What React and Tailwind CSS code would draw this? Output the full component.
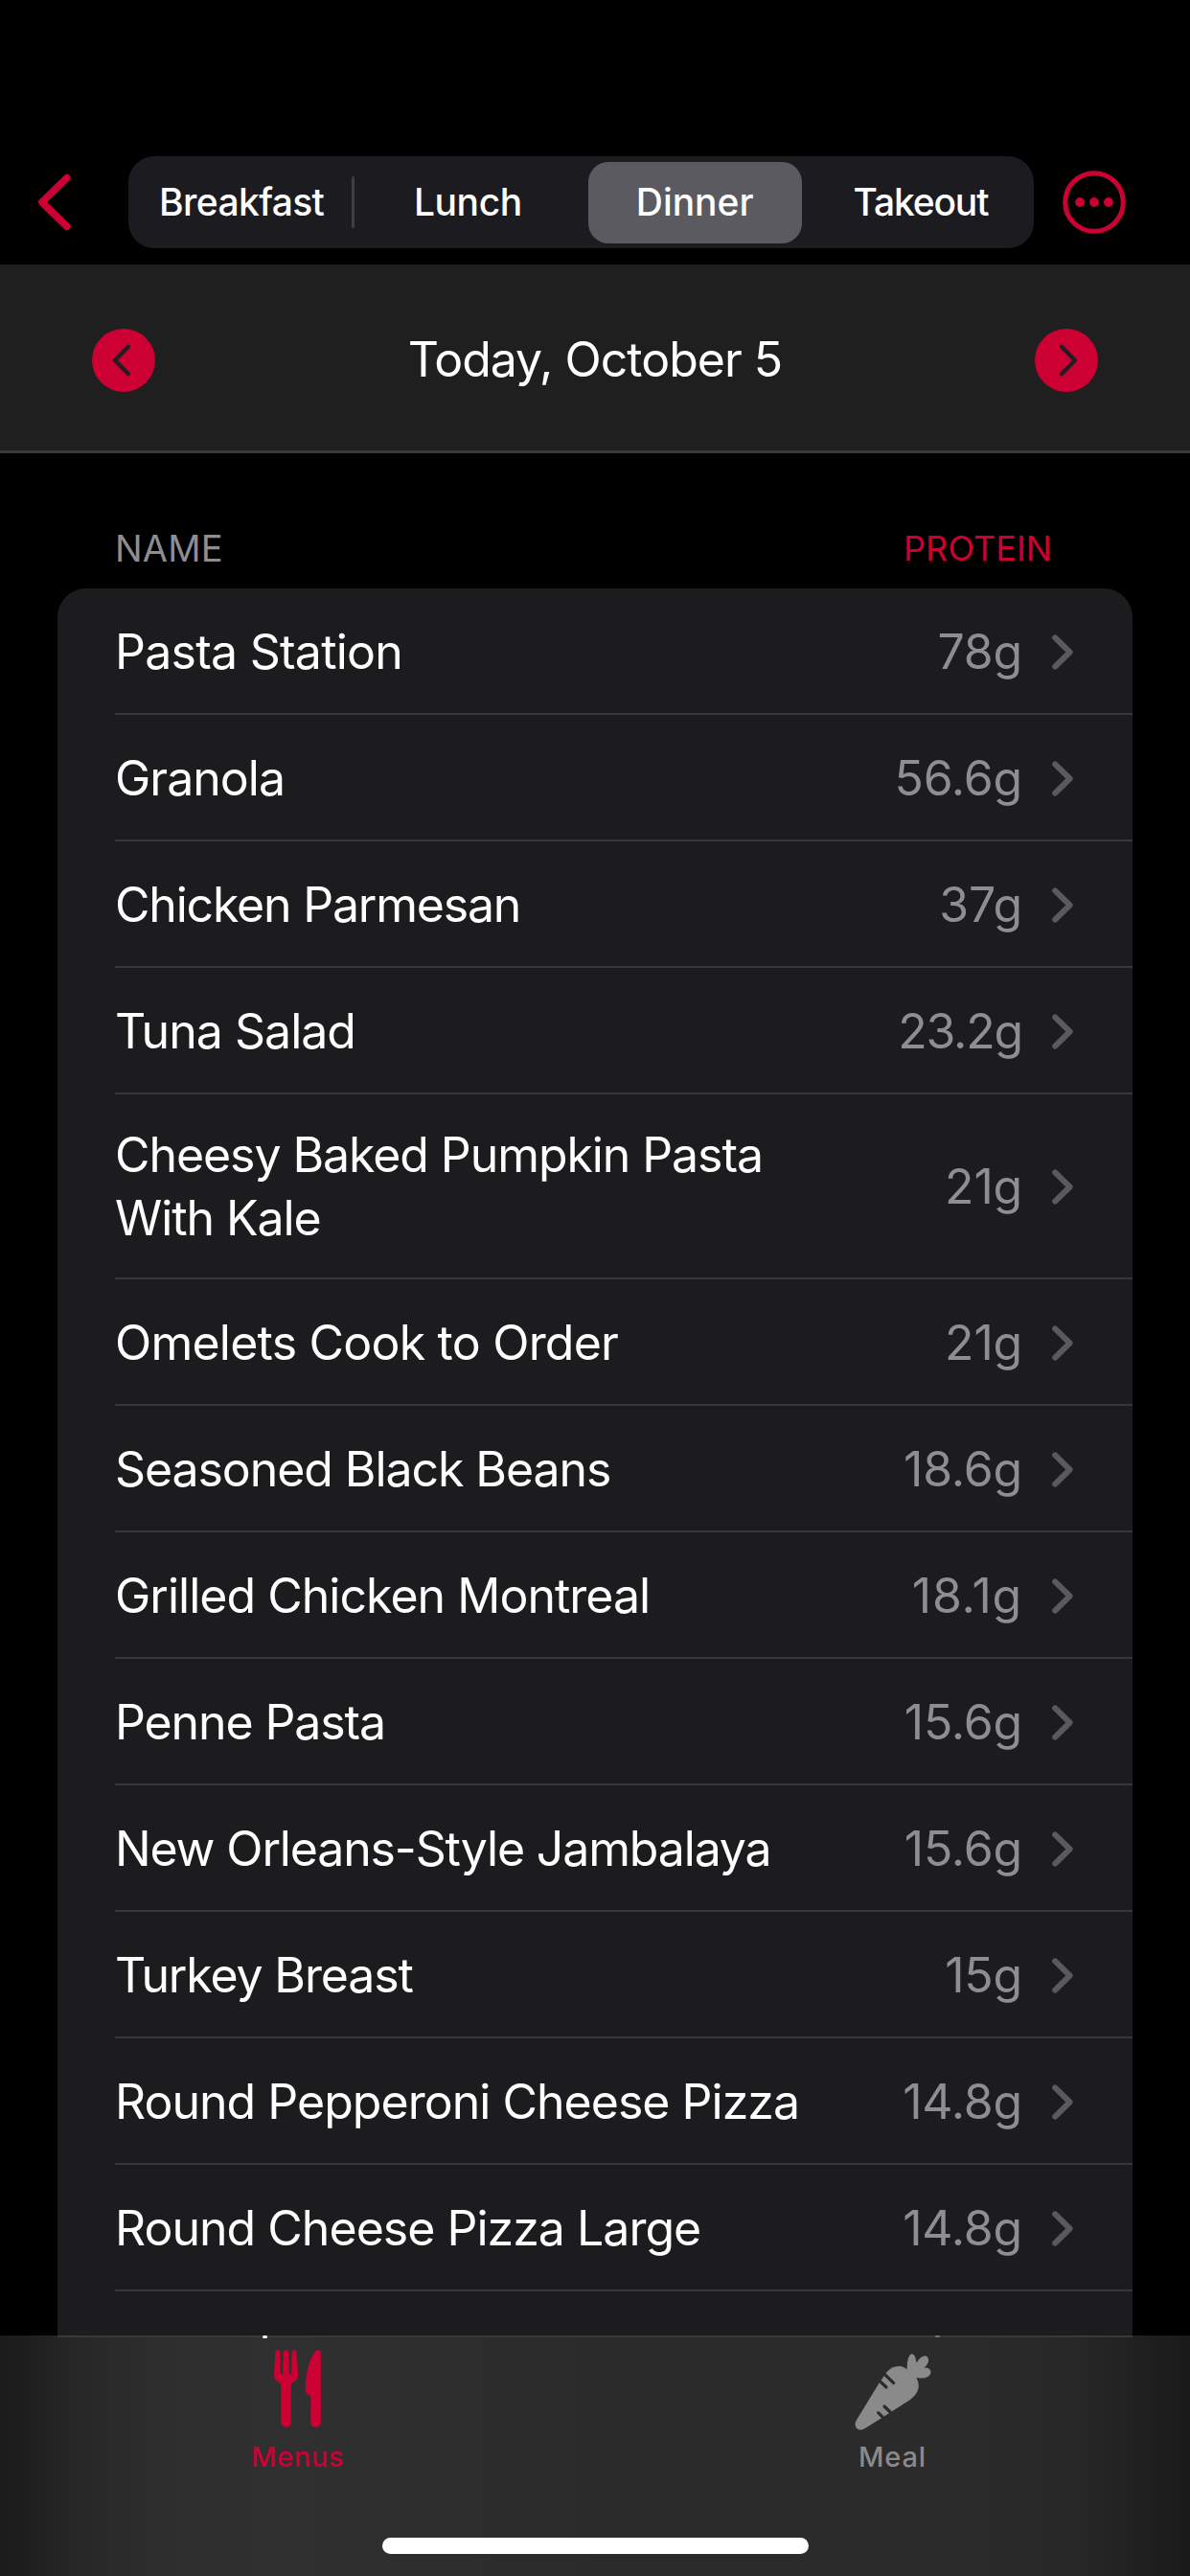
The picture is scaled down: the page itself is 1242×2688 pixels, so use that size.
const ITEMS = [
  { name: "Pasta Station", value: "78g", tracking: "tracking-[-0.75px]" },
  { name: "Granola", value: "56.6g" },
  { name: "Chicken Parmesan", value: "37g", tracking: "tracking-[-1.2px]" },
  { name: "Tuna Salad", value: "23.2g", valueTracking: "tracking-[-1.2px]" },
  { name: "Cheesy Baked Pumpkin Pasta With Kale", value: "21g", tall: true, tracking: "tracking-[-1.08px]" },
  { name: "Omelets Cook to Order", value: "21g", tracking: "tracking-[-0.78px]" },
  { name: "Seasoned Black Beans", value: "18.6g", tracking: "tracking-[-1.08px]" },
  { name: "Grilled Chicken Montreal", value: "18.1g", valueTracking: "tracking-[0.8px]" },
  { name: "Penne Pasta", value: "15.6g", tracking: "tracking-[-1.1px]" },
  { name: "New Orleans-Style Jambalaya", value: "15.6g", tracking: "tracking-[-1.15px]" },
  { name: "Turkey Breast", value: "15g", tracking: "tracking-[-1.15px]" },
  { name: "Round Pepperoni Cheese Pizza", value: "14.8g" },
  { name: "Round Cheese Pizza Large", value: "14.8g" },
];

const SEGMENTS = [
  { label: "Breakfast", tracking: "tracking-[-0.6px]" },
  { label: "Lunch", tracking: "tracking-[-0.4px]" },
  { label: "Dinner", tracking: "tracking-[-0.05px]", selected: true },
  { label: "Takeout", tracking: "tracking-[-1.15px]" },
];

function BackIcon() {
  return (
    <svg width="36" height="60" viewBox="0 0 36 60" fill="none" stroke="#cc0033" strokeWidth="7.500" strokeLinecap="round" strokeLinejoin="round">
      <path d="M31 4.5 4.8 30 31 55.5" />
    </svg>
  );
}

function MoreIcon() {
  return (
    <svg width="66" height="66" viewBox="0 0 66 66" fill="#cc0033">
      <circle cx="33" cy="33" r="30.3" fill="none" stroke="#cc0033" strokeWidth="5" />
      <circle cx="18.1" cy="33" r="4.9" />
      <circle cx="33" cy="33" r="4.9" />
      <circle cx="47.9" cy="33" r="4.9" />
    </svg>
  );
}

function DayButton({ next }) {
  return (
    <svg width="66" height="66" viewBox="0 0 66 66" className={next ? "-scale-x-100" : ""}>
      <circle cx="33" cy="33" r="33" fill="#cc0033" />
      <path d="M38 18.8 24 33 38 47.2" fill="none" stroke="#1f1f1f" strokeWidth="4.2" strokeLinecap="round" strokeLinejoin="round" />
    </svg>
  );
}

function RowChevron() {
  return (
    <svg width="22" height="37" viewBox="0 0 22 37" fill="none" stroke="#5a5a5d" strokeWidth="6" strokeLinecap="round" strokeLinejoin="round">
      <path d="M3.2 3.4 18.6 18.5 3.2 33.6" />
    </svg>
  );
}

function ForkKnifeIcon() {
  return (
    <svg width="49" height="81" viewBox="138 65 147 243" fill="#cc0033">
      <path d="M142 73 Q143 66 150 66 Q157 66 157.500 73 L158.500 138 Q159 142 162 142 Q165 142 165.500 138 L167 73 Q168 66 175.500 66 Q183 66 184 73 L185.500 138 Q186 142 189 142 Q192 142 192.500 138 L193.500 73 Q194 66 201 66 Q208 66 209 73 L213 140 Q214 160 198 167 Q191 170 191 177 L191 293 Q190 307 176 307 Q162 307 160.500 293 L160.500 177 Q160 170 153 167 Q137 160 138 140 Z" />
      <path d="M275 66 Q284 66 284.500 76 L284.500 293 Q283 307 268 307 Q254 307 252.500 293 L253.500 217 Q254 210 247 207 Q236 202 236 192 Q236 135 254 93 Q264 66 275 66 Z" />
    </svg>
  );
}

function CarrotIcon() {
  return (
    <svg width="80" height="80" viewBox="89 79 240 240" fill="#8a8a8b">
      <mask id="carrot-cuts" maskUnits="userSpaceOnUse" x="80" y="70" width="260" height="260">
        <rect x="80" y="70" width="260" height="260" fill="white" />
        <g stroke="black" strokeWidth="9.500" strokeLinecap="round">
          <path d="M164 161 L188 184" />
          <path d="M177 138 L211 171" />
          <path d="M163 264 L181 282" />
          <path d="M182 244 L207 268" />
        </g>
      </mask>
      <path mask="url(#carrot-cuts)" d="M94 288 L165 172 L190 136 Q205 118 228 118 Q243 119 253 129 Q252 106 257 93 Q262 80 269 80 Q279 82 281 101 Q282 108 284 105 Q298 85 312 86 Q324 91 319 107 Q316 116 306 123 Q323 121 328 136 Q326 150 312 154 Q298 157 282 154 Q291 168 289 185 Q286 206 262 224 L208 258 L161 288 L120 314 Q105 322 95 312 Q87 301 94 288 Z" />
    </svg>
  );
}

function Row({ item }) {
  return (
    <li className={`flex pl-[60px] ${item.tall ? "h-[193px]" : "h-[132px]"}`}>
      <div className={`flex flex-1 items-center border-b-2 border-[#38383a] pr-[62px] ${item.tall ? "pt-px" : "pt-[2px]"}`}>
        <span className={`w-[740px] text-[50px] leading-[66px] text-white ${item.tracking ?? "tracking-[-0.98px]"}`}>
          {item.name}
        </span>
        <span className={`ml-auto mr-[31px] text-[50px] leading-[66px] text-[#8d8d93] ${item.valueTracking ?? "tracking-[-0.2px]"}`}>
          {item.value}
        </span>
        <RowChevron />
      </div>
    </li>
  );
}

export default function App() {
  return (
    <div className="flex h-[2688px] w-[1242px] flex-col overflow-hidden bg-black font-['Inter',sans-serif] font-[430]">
      <header className="flex h-[276px] shrink-0 items-start pl-[39px] pt-[163px]">
        <div className="flex h-24 w-[95px] items-center">
          <BackIcon />
        </div>
        <div className="grid h-24 w-[945px] grid-cols-4 rounded-[27px] bg-[#1c1b20]">
          {SEGMENTS.map((s, i) => (
            <div key={s.label} className="flex items-center">
              <div
                className={`flex h-[85px] flex-1 items-center justify-center rounded-[21px] text-[39px] font-medium text-white ${s.tracking} ${
                  s.selected ? "ml-[7px] mr-[6px] bg-[#5b5a60]" : ""
                }`}
              >
                {s.label}
              </div>
              {i === 0 && <div className="-ml-[3px] h-[54px] w-[3px] rounded-full bg-[#3f3e43]" />}
            </div>
          ))}
        </div>
        <div className="ml-[30px] flex h-24 items-center">
          <MoreIcon />
        </div>
      </header>

      <section className="flex h-[197px] shrink-0 items-center justify-between border-b-[3px] border-[#38383a] bg-[#1f1f1f] px-24 pt-[5px]">
        <DayButton />
        <h1 className="text-[50px] tracking-[-1px] text-white">Today, October 5</h1>
        <DayButton next />
      </section>

      <main className="flex min-h-0 flex-1 flex-col overflow-hidden px-[60px]">
        <div className="flex h-[141px] shrink-0 items-center justify-between pl-[60px] pr-[84px] pt-[57px]">
          <span className="text-[38px] leading-none tracking-[0.2px] text-[#8d8d93]">NAME</span>
          <span className="text-[36px] leading-none tracking-[0.1px] text-[#cc0033]">PROTEIN</span>
        </div>
        <ul className="flex-1 rounded-t-[30px] bg-[#1c1c1e]">
          {ITEMS.map((item) => (
            <Row key={item.name} item={item} />
          ))}
        </ul>
      </main>

      <footer className="flex h-[251px] shrink-0 flex-col bg-[linear-gradient(90deg,#1b1b1b_0%,#1e1e1e_2%,#282828_7%,#2e2e2f_14%,#303031_24%,#2e2e2f_34%,#2b2b2c_50%,#2b2b2c_80%,#282828_90%,#1e1e1e_97%,#1a1a1a_100%)]">
        <div className="mx-[60px] flex h-[2px] bg-[#39393b]">
          <span className="ml-[214px] h-[3px] w-[5px] rounded-full bg-white" />
          <span className="ml-[697px] h-[2px] w-[5px] rounded-full bg-[#77777b]" />
        </div>
        <nav className="grid h-[150px] grid-cols-2">
          <div className="flex flex-col items-center pt-[13px] text-[#cc0033]">
            <div className="flex h-[84px] items-start">
              <ForkKnifeIcon />
            </div>
            <span className="mt-[10px] text-[29px] font-[540] leading-9 tracking-[0.55px]">Menus</span>
          </div>
          <div className="flex flex-col items-center pt-[13px] text-[#8a8a8b]">
            <div className="flex h-[84px] items-end">
              <CarrotIcon />
            </div>
            <span className="mt-[10px] text-[29px] font-[540] leading-9 tracking-[0.8px]">Meal</span>
          </div>
        </nav>
        <div className="mx-auto mt-[59px] h-[17px] w-[445px] rounded-full bg-white" />
      </footer>
    </div>
  );
}
